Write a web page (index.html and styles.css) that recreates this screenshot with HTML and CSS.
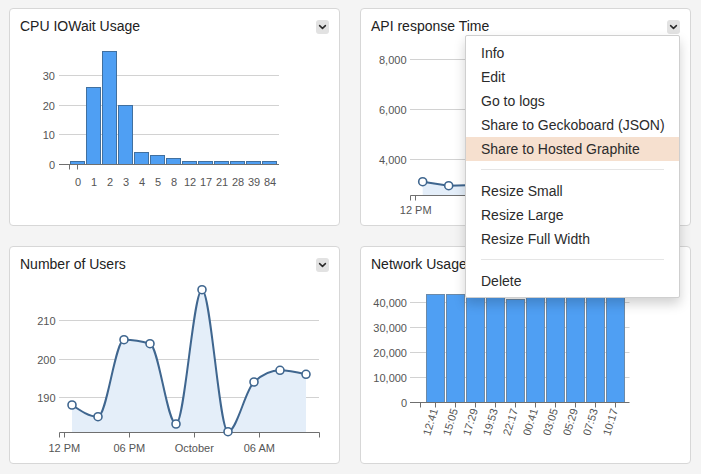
FILE: index.html
```html
<!DOCTYPE html>
<html lang="en">
<head>
<meta charset="utf-8">
<title>Dashboard</title>
<link rel="stylesheet" href="styles.css">
</head>
<body>
<div class="board">

  <section class="card">
    <header class="card-head">
      <h2 class="card-title">CPU IOWait Usage</h2>
      <div class="dropdown">
        <button class="toggle" type="button" aria-label="Options"><svg width="13" height="14" viewBox="0 0 13 14"><path d="M3.6 5.6 L6.5 8.4 L9.4 5.6"/></svg></button>
      </div>
    </header>
    <svg class="chart" viewBox="0 0 329 189">
      <g class="grid">
        <line x1="49" x2="269" y1="39.5" y2="39.5"/>
        <line x1="49" x2="269" y1="69.5" y2="69.5"/>
        <line x1="49" x2="269" y1="98.5" y2="98.5"/>
      </g>
      <g class="ylab">
        <text x="45" y="43.5">30</text>
        <text x="45" y="73.5">20</text>
        <text x="45" y="102.5">10</text>
        <text x="45" y="132.5">0</text>
      </g>
      <g class="bars">
        <rect x="60.5" y="125.5" width="14" height="3"/>
        <rect x="76.5" y="51.5" width="14" height="77"/>
        <rect x="92.5" y="15.5" width="14" height="113"/>
        <rect x="108.5" y="69.5" width="14" height="59"/>
        <rect x="124.5" y="116.5" width="14" height="12"/>
        <rect x="140.5" y="119.5" width="14" height="9"/>
        <rect x="156.5" y="122.5" width="14" height="6"/>
        <rect x="172.5" y="125.5" width="14" height="3"/>
        <rect x="188.5" y="125.5" width="14" height="3"/>
        <rect x="204.5" y="125.5" width="14" height="3"/>
        <rect x="220.5" y="125.5" width="14" height="3"/>
        <rect x="236.5" y="125.5" width="14" height="3"/>
        <rect x="252.5" y="125.5" width="14" height="3"/>
      </g>
      <g class="axis">
        <line x1="49" x2="269" y1="128.5" y2="128.5"/>
        <line x1="59.5" x2="59.5" y1="128.5" y2="133.5"/>
        <line x1="67.5" x2="67.5" y1="128.5" y2="133.5"/>
      </g>
      <g class="xlab">
        <text x="68" y="149.5">0</text>
        <text x="84" y="149.5">1</text>
        <text x="100" y="149.5">2</text>
        <text x="116" y="149.5">3</text>
        <text x="132" y="149.5">4</text>
        <text x="148" y="149.5">5</text>
        <text x="164" y="149.5">8</text>
        <text x="180" y="149.5">12</text>
        <text x="196" y="149.5">17</text>
        <text x="212" y="149.5">21</text>
        <text x="228" y="149.5">28</text>
        <text x="244" y="149.5">39</text>
        <text x="260" y="149.5">84</text>
      </g>
    </svg>
  </section>

  <section class="card">
    <header class="card-head">
      <h2 class="card-title">API response Time</h2>
      <div class="dropdown">
        <button class="toggle" type="button" aria-label="Options"><svg width="13" height="14" viewBox="0 0 13 14"><path d="M3.6 5.6 L6.5 8.4 L9.4 5.6"/></svg></button>
        <ul class="menu">
          <li>Info</li>
          <li>Edit</li>
          <li>Go to logs</li>
          <li>Share to Geckoboard (JSON)</li>
          <li class="active">Share to Hosted Graphite</li>
          <li class="divider"></li>
          <li>Resize Small</li>
          <li>Resize Large</li>
          <li>Resize Full Width</li>
          <li class="divider"></li>
          <li>Delete</li>
        </ul>
      </div>
    </header>
    <svg class="chart" viewBox="0 0 329 189">
      <g class="grid">
        <line x1="49" x2="269" y1="23.5" y2="23.5"/>
        <line x1="49" x2="269" y1="73.5" y2="73.5"/>
        <line x1="49" x2="269" y1="123.5" y2="123.5"/>
      </g>
      <g class="ylab">
        <text x="45.5" y="27.5">8,000</text>
        <text x="45.5" y="77.5">6,000</text>
        <text x="45.5" y="127.5">4,000</text>
      </g>
      <path class="area" d="M61.7,145.7 L87.7,149.7 L113.7,149 L139.7,141 L165.7,146 L165.7,159.5 L61.7,159.5 Z"/>
      <path class="line" d="M61.7,145.7 L87.7,149.7 L113.7,149 L139.7,141 L165.7,146"/>
      <g class="dots">
        <circle cx="61.7" cy="145.7" r="4"/>
        <circle cx="87.7" cy="149.7" r="4"/>
        <circle cx="113.7" cy="149" r="4"/>
      </g>
      <g class="axis">
        <line x1="49.5" x2="269" y1="159.5" y2="159.5"/>
        <line x1="49.5" x2="49.5" y1="159.5" y2="164.5"/>
        <line x1="54.5" x2="54.5" y1="159.5" y2="164.5"/>
      </g>
      <g class="xlab">
        <text x="54.7" y="178">12 PM</text>
      </g>
    </svg>
  </section>

  <section class="card">
    <header class="card-head">
      <h2 class="card-title">Number of Users</h2>
      <div class="dropdown">
        <button class="toggle" type="button" aria-label="Options"><svg width="13" height="14" viewBox="0 0 13 14"><path d="M3.6 5.6 L6.5 8.4 L9.4 5.6"/></svg></button>
      </div>
    </header>
    <svg class="chart" viewBox="0 0 329 189">
      <g class="grid">
        <line x1="49" x2="309" y1="46.5" y2="46.5"/>
        <line x1="49" x2="309" y1="85.5" y2="85.5"/>
        <line x1="49" x2="309" y1="123.5" y2="123.5"/>
      </g>
      <g class="ylab">
        <text x="45.5" y="50.5">210</text>
        <text x="45.5" y="89.5">200</text>
        <text x="45.5" y="127.5">190</text>
      </g>
      <path class="area" d="M62,131 C70.67,136.85 79.33,142.7 88,142.7 C96.67,142.7 105.33,65.7 114,65.7 C122.67,65.7 131.33,67.03 140,69.7 C148.67,72.37 157.33,150 166,150 C174.67,150 183.33,15.7 192,15.7 C200.67,15.7 209.33,157.7 218,157.7 C226.67,157.7 235.33,115.8 244,108 C252.67,100.2 261.33,96.3 270,96.3 C278.67,96.3 287.33,98.3 296,100.3 L296,158.5 L62,158.5 Z"/>
      <path class="line" d="M62,131 C70.67,136.85 79.33,142.7 88,142.7 C96.67,142.7 105.33,65.7 114,65.7 C122.67,65.7 131.33,67.03 140,69.7 C148.67,72.37 157.33,150 166,150 C174.67,150 183.33,15.7 192,15.7 C200.67,15.7 209.33,157.7 218,157.7 C226.67,157.7 235.33,115.8 244,108 C252.67,100.2 261.33,96.3 270,96.3 C278.67,96.3 287.33,98.3 296,100.3"/>
      <g class="axis">
        <line x1="49.5" x2="309.5" y1="158.5" y2="158.5"/>
        <line x1="49.5" x2="49.5" y1="158.5" y2="163.5"/>
        <line x1="54.5" x2="54.5" y1="158.5" y2="163.5"/>
        <line x1="119.5" x2="119.5" y1="158.5" y2="163.5"/>
        <line x1="184.5" x2="184.5" y1="158.5" y2="163.5"/>
        <line x1="249.5" x2="249.5" y1="158.5" y2="163.5"/>
        <line x1="309.5" x2="309.5" y1="158.5" y2="163.5"/>
      </g>
      <g class="dots">
        <circle cx="62" cy="131" r="4"/>
        <circle cx="88" cy="142.7" r="4"/>
        <circle cx="114" cy="65.7" r="4"/>
        <circle cx="140" cy="69.7" r="4"/>
        <circle cx="166" cy="150" r="4"/>
        <circle cx="192" cy="15.7" r="4"/>
        <circle cx="218" cy="157.7" r="4"/>
        <circle cx="244" cy="108" r="4"/>
        <circle cx="270" cy="96.3" r="4"/>
        <circle cx="296" cy="100.3" r="4"/>
      </g>
      <g class="xlab">
        <text x="54.3" y="177.5">12 PM</text>
        <text x="119.3" y="177.5">06 PM</text>
        <text x="184.3" y="177.5">October</text>
        <text x="249.3" y="177.5">06 AM</text>
      </g>
    </svg>
  </section>

  <section class="card">
    <header class="card-head">
      <h2 class="card-title">Network Usage</h2>
      <div class="dropdown">
        <button class="toggle" type="button" aria-label="Options"><svg width="13" height="14" viewBox="0 0 13 14"><path d="M3.6 5.6 L6.5 8.4 L9.4 5.6"/></svg></button>
      </div>
    </header>
    <svg class="chart" viewBox="0 0 329 189">
      <g class="grid">
        <line x1="49" x2="268.5" y1="28.5" y2="28.5"/>
        <line x1="49" x2="268.5" y1="53.5" y2="53.5"/>
        <line x1="49" x2="268.5" y1="78.5" y2="78.5"/>
        <line x1="49" x2="268.5" y1="103.5" y2="103.5"/>
      </g>
      <g class="ylab">
        <text x="46" y="32.5">40,000</text>
        <text x="46" y="57.5">30,000</text>
        <text x="46" y="82.5">20,000</text>
        <text x="46" y="107.5">10,000</text>
        <text x="46" y="132.5">0</text>
      </g>
      <g class="bars alt">
        <rect x="65.5" y="20.5" width="18" height="108"/>
        <rect x="85.5" y="20.5" width="18" height="108"/>
        <rect x="105.5" y="22.5" width="18" height="106"/>
        <rect x="125.5" y="21.5" width="18" height="107"/>
        <rect x="145.5" y="25.5" width="18" height="103"/>
        <rect x="165.5" y="21.5" width="18" height="107"/>
        <rect x="185.5" y="22.5" width="18" height="106"/>
        <rect x="205.5" y="20.5" width="18" height="108"/>
        <rect x="225.5" y="21.5" width="18" height="107"/>
        <rect x="245.5" y="22.5" width="18" height="106"/>
      </g>
      <g class="axis">
        <line x1="49" x2="268.5" y1="128.5" y2="128.5"/>
        <line x1="59.5" x2="59.5" y1="128.5" y2="133.5"/>
        <line x1="74.5" x2="74.5" y1="128.5" y2="133.5"/>
        <line x1="94.5" x2="94.5" y1="128.5" y2="133.5"/>
        <line x1="114.5" x2="114.5" y1="128.5" y2="133.5"/>
        <line x1="134.5" x2="134.5" y1="128.5" y2="133.5"/>
        <line x1="154.5" x2="154.5" y1="128.5" y2="133.5"/>
        <line x1="174.5" x2="174.5" y1="128.5" y2="133.5"/>
        <line x1="194.5" x2="194.5" y1="128.5" y2="133.5"/>
        <line x1="214.5" x2="214.5" y1="128.5" y2="133.5"/>
        <line x1="234.5" x2="234.5" y1="128.5" y2="133.5"/>
        <line x1="254.5" x2="254.5" y1="128.5" y2="133.5"/>
      </g>
      <g class="xlab rot">
        <text transform="translate(77,136) rotate(-73)">12:41</text>
        <text transform="translate(97,136) rotate(-73)">15:05</text>
        <text transform="translate(117,136) rotate(-73)">17:29</text>
        <text transform="translate(137,136) rotate(-73)">19:53</text>
        <text transform="translate(157,136) rotate(-73)">22:17</text>
        <text transform="translate(177,136) rotate(-73)">00:41</text>
        <text transform="translate(197,136) rotate(-73)">03:05</text>
        <text transform="translate(217,136) rotate(-73)">05:29</text>
        <text transform="translate(237,136) rotate(-73)">07:53</text>
        <text transform="translate(257,136) rotate(-73)">10:17</text>
      </g>
    </svg>
  </section>

</div>
</body>
</html>
```
FILE: styles.css
```css
html, body {
  margin: 0;
  padding: 0;
}

body {
  background: #f4f4f4;
  font-family: "Liberation Sans", Arial, Helvetica, sans-serif;
  color: #333;
  width: 701px;
  height: 474px;
  overflow: hidden;
}

.board {
  display: grid;
  grid-template-columns: 331px 331px;
  grid-auto-rows: 218px;
  column-gap: 20px;
  row-gap: 20px;
  padding: 8px 0 0 9px;
}

.card {
  background: #fff;
  border: 1px solid #d7d7d7;
  border-radius: 4px;
  display: flex;
  flex-direction: column;
}

.card-head {
  display: flex;
  justify-content: space-between;
  align-items: center;
  padding: 8px 10px 0;
  height: 19px;
}

.card-title {
  margin: 0;
  font-size: 14px;
  line-height: 19px;
  font-weight: normal;
  color: #222;
}

.dropdown {
  position: relative;
  width: 13px;
  height: 14px;
}

.toggle {
  display: block;
  width: 13px;
  height: 14px;
  padding: 0;
  margin: 0;
  border: 0;
  border-radius: 3px;
  background: #e2e2e2;
}

.toggle svg {
  display: block;
}

.toggle path {
  fill: none;
  stroke: #2a2a2a;
  stroke-width: 1.5;
  stroke-linecap: round;
  stroke-linejoin: round;
}

.menu {
  position: absolute;
  z-index: 10;
  top: 15px;
  right: 0;
  width: 215px;
  box-sizing: border-box;
  margin: 0;
  padding: 5px 0 4px;
  list-style: none;
  background: #fff;
  border: 1px solid #cfcfcf;
  border-radius: 2px;
  box-shadow: 0 6px 12px rgba(0, 0, 0, 0.18);
}

.menu li {
  padding: 0 15px;
  font-size: 14px;
  line-height: 24px;
  color: #2b2b2b;
  white-space: nowrap;
}

.menu li.active {
  background: #f6e0cf;
}

.menu li.divider {
  height: 1px;
  padding: 0;
  margin: 8px 15px 9px;
  background: #e5e5e5;
}

.chart {
  display: block;
  width: 329px;
  height: 189px;
}

.chart text {
  font-family: "Liberation Sans", Arial, Helvetica, sans-serif;
  font-size: 11px;
  fill: #555;
}

.ylab text {
  text-anchor: end;
}

.xlab text {
  text-anchor: middle;
}

.xlab.rot text {
  text-anchor: end;
}

.grid line {
  stroke: #d2d2d2;
  stroke-width: 1;
}

.axis line {
  stroke: #6f6f6f;
  stroke-width: 1;
}

.bars rect {
  fill: #4f9ff3;
  stroke: #41709f;
  stroke-width: 1;
}

.bars.alt rect {
  stroke: #6c8aa8;
}

.area {
  fill: #e4eef9;
  stroke: none;
}

.line {
  fill: none;
  stroke: #3f668f;
  stroke-width: 2;
}

.dots circle {
  fill: #fff;
  stroke: #3f668f;
  stroke-width: 1.6;
}
```
